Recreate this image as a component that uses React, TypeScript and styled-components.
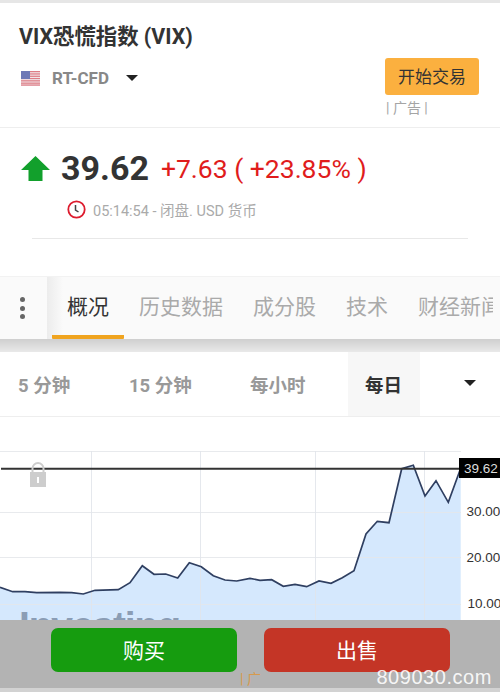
import { createGlobalStyle } from "styled-components";
import styled from "styled-components";

const GlobalStyle = createGlobalStyle`
  html, body {
    margin: 0;
    padding: 0;
    background: #fff;
  }
  body {
    font-family: Roboto, "Noto Sans CJK SC", sans-serif;
  }
`;

const Page = styled.div`
  position: relative;
  width: 500px;
  height: 692px;
  overflow: hidden;
  background: #fff;
  border-top: 3px solid #e6e6e6;
  box-sizing: border-box;
`;

const Header = styled.header`
  height: 125px;
  box-sizing: border-box;
  border-bottom: 1px solid #eeeeee;
  padding: 20px 21px 0 19px;
  display: flex;
  justify-content: space-between;
`;
const HeaderLeft = styled.div`
  display: flex;
  flex-direction: column;
  gap: 18px;
`;
const Title = styled.h1`
  margin: 0;
  font-size: 21.4px;
  line-height: 27px;
  font-weight: 700;
  color: #333;
`;
const Exchange = styled.div`
  display: flex;
  align-items: center;
  padding-left: 2px;
`;
const ExchangeName = styled.span`
  margin: 0 17px 0 12px;
  font-size: 17px;
  font-weight: 700;
  color: #888;
`;
const Ad = styled.div`
  padding-top: 35px;
  display: flex;
  flex-direction: column;
  align-items: flex-start;
`;
const TradeButton = styled.div`
  width: 94px;
  height: 37px;
  box-sizing: border-box;
  padding-bottom: 2px;
  border-radius: 3px;
  background: #fbb03f;
  color: #333;
  font-size: 17px;
  display: flex;
  align-items: center;
  justify-content: center;
`;
const AdNote = styled.div`
  margin: 5px 0 0 1px;
  font-size: 14px;
  line-height: 17px;
  color: #a5a5a5;
`;

const Quote = styled.section`
  height: 148px;
  box-sizing: border-box;
  padding-top: 20px;
  display: flex;
  flex-direction: column;
`;
const PriceRow = styled.div`
  display: flex;
  align-items: center;
  height: 40px;
  padding-left: 21px;
`;
const Price = styled.span`
  margin: 0 12px 0 11px;
  font-size: 34px;
  font-weight: 700;
  color: #333;
`;
const Change = styled.span`
  font-size: 26.5px;
  color: #e01c1c;
  white-space: pre;
`;
const TimeRow = styled.div`
  display: flex;
  align-items: center;
  gap: 7px;
  height: 20px;
  margin: 11px 0 0 67px;
  font-size: 14.5px;
  color: #aaa;
`;
const Divider = styled.div`
  margin: 19px 32px 0;
  border-top: 1px solid #e8e8e8;
`;

const TabBar = styled.nav`
  height: 63px;
  box-sizing: border-box;
  border-top: 1px solid #f2f2f2;
  background: #fafafa;
  padding-right: 7px;
  display: flex;
  overflow: hidden;
`;
const MenuButton = styled.div`
  width: 47px;
  flex: none;
  display: flex;
  flex-direction: column;
  align-items: center;
  justify-content: center;
  gap: 3.5px;
  padding: 0 3px 0 0;
  box-sizing: border-box;
`;
const Dot = styled.i`
  width: 5px;
  height: 5px;
  border-radius: 50%;
  background: #666;
`;
const TabList = styled.div`
  flex: 1;
  display: flex;
  align-items: stretch;
  padding-left: 5px;
  background: linear-gradient(90deg, #ececec, #fafafa 16px);
  overflow: hidden;
  min-width: 0;
`;
const Tab = styled.div<{ $active?: boolean }>`
  flex: none;
  box-sizing: border-box;
  padding: 0 15px;
  font-size: 21px;
  line-height: 61px;
  white-space: nowrap;
  color: ${(p) => (p.$active ? "#333" : "#aaa")};
  border-bottom: 4px solid ${(p) => (p.$active ? "#f0a41f" : "transparent")};
  border-radius: 0 0 1px 1px;
`;

const TabShadow = styled.div`
  height: 13px;
  background: linear-gradient(#cfcfcf, #e9e9e9);
`;

const Periods = styled.div`
  height: 65px;
  box-sizing: border-box;
  border-bottom: 1px solid #eeeeee;
  display: flex;
  align-items: stretch;
`;
const Period = styled.div<{ $active?: boolean; $width: number }>`
  width: ${(p) => p.$width}px;
  flex: none;
  box-sizing: border-box;
  padding-left: ${(p) => (p.$active ? 17 : 18)}px;
  display: flex;
  align-items: center;
  font-size: 18.5px;
  font-weight: 700;
  color: ${(p) => (p.$active ? "#333" : "#999")};
  background: ${(p) => (p.$active ? "#f7f7f7" : "transparent")};
`;
const PeriodCaret = styled.div`
  flex: 1;
  display: flex;
  justify-content: flex-end;
  padding: 28px 24px 0 0;
`;

const ChartArea = styled.div`
  margin-top: 34px;
  height: 169px;
  overflow: hidden;
`;
const ChartSvg = styled.svg`
  display: block;
`;

const ActionBar = styled.div`
  height: 68px;
  box-sizing: border-box;
  background: #b3b3b3;
  padding: 8px 50px 0 51px;
  display: flex;
  justify-content: space-between;
`;
const Action = styled.div<{ $color: string }>`
  width: 186px;
  height: 44px;
  box-sizing: border-box;
  padding-bottom: 2px;
  border-radius: 7px;
  background: ${(p) => p.$color};
  color: #fff;
  font-size: 21px;
  display: flex;
  align-items: center;
  justify-content: center;
`;
const BottomStrip = styled.div`
  height: 4px;
  background: #d2d2d2;
`;
const BarAdNote = styled.div`
  position: absolute;
  left: 240px;
  top: 668px;
  font-size: 14px;
  line-height: 16px;
  color: #d69a4e;
`;
const Watermark = styled.div`
  position: absolute;
  right: 8px;
  top: 661px;
  font-family: "Liberation Sans", sans-serif;
  font-size: 20px;
  line-height: 26px;
  letter-spacing: 0.55px;
  color: rgba(255, 255, 255, 0.9);
`;

const Caret = styled.svg`
  display: block;
  flex: none;
`;

const CaretIcon = () => (
  <Caret width="12" height="6" viewBox="0 0 12 6">
    <path d="M0 0h12L6 6z" fill="#222" />
  </Caret>
);

const Flag = () => (
  <svg width="19" height="15" viewBox="0 0 19 15" style={{ flex: "none" }}>
    <rect width="19" height="15" fill="#f3f1f3" />
    {[0, 2.3, 4.6, 6.9, 9.2, 11.5, 13.4].map((y) => (
      <rect key={y} y={y} width="19" height="1.3" fill="#de7d86" />
    ))}
    <rect width="9" height="8" fill="#6d78b6" />
  </svg>
);

const UpArrow = () => (
  <svg width="29" height="25" viewBox="0 0 29 25" style={{ flex: "none" }}>
    <path d="M14.5 0 29 14h-7.500v11h-14V14H0z" fill="#12a02c" />
  </svg>
);

const Clock = () => (
  <svg width="19" height="19" viewBox="0 0 19 19" style={{ flex: "none" }}>
    <circle cx="9.500" cy="9.500" r="8.200" fill="none" stroke="#dd1c2e" strokeWidth="1.800" />
    <path d="M8.500 5v5l3 2" fill="none" stroke="#444" strokeWidth="1.500" />
  </svg>
);

const leftLine =
  "0,587.3 12.7,591.7 25,591.7 36.700,592.7 60,592.3 71.700,592.7 83.300,594 95,590.3 118.300,589.7 130,582.7 142.300,565.7 154,574.3 165.700,574 177.700,578 189.300,562.7 201.300,566.7 213.300,575.7 225,580 236.700,581 250,578.3";
const rightLine =
  "260,580.3 271.700,579.7 283.300,586.3 295,584.3 306.700,586.7 319,581 331,583.3 342.300,577.7 354,570.7 366,534 377.300,521.3 389,522.7 401.700,468.7 413.300,465.3 425,496 436,480.7 448.300,502.3 460.700,468.3";
const linePoints = `${leftLine} ${rightLine}`;

const Chart = () => (
  <ChartSvg width="500" height="169" viewBox="0 451 500 169">
    <polygon points={`${linePoints} 460.700,620 0,620`} fill="#d5e8fd" />
    {[451.500, 512.500, 557.500, 604.500].map((y) => (
      <line key={y} x1="0" x2="461" y1={y} y2={y} stroke="#e4e6ea" strokeOpacity="0.85" />
    ))}
    {[91.500, 200.500, 315.500, 424.500].map((x) => (
      <line key={x} x1={x} x2={x} y1="451" y2="620" stroke="#e1e4ea" strokeOpacity="0.85" />
    ))}
    <text
      x="19"
      y="639"
      fontFamily="Liberation Sans, sans-serif"
      fontWeight="700"
      fontSize="39"
      fill="#8b9db5"
      textLength="162"
    >
      Investing
    </text>
    <polyline points={linePoints} fill="none" stroke="#2f3f61" strokeWidth="1.700" />
    <line x1="1" x2="461" y1="468.700" y2="468.700" stroke="#333" strokeWidth="2" />
    <g fill="#cdcdcd">
      <rect x="30" y="472" width="16" height="15" />
      <path
        d="M32.500 472v-3.500a5.500 5.500 0 0 1 11 0V472"
        fill="none"
        stroke="#cdcdcd"
        strokeWidth="2"
      />
    </g>
    <rect x="37" y="477" width="2" height="6" fill="#fff" />
    <rect x="459" y="458" width="41" height="20" fill="#000" />
    <g fontFamily="Liberation Sans, sans-serif" fontSize="13.500">
      <text x="464" y="473" fill="#ddd">
        39.62
      </text>
      <text x="466.500" y="516" fill="#333">
        30.00
      </text>
      <text x="466.500" y="562" fill="#333">
        20.00
      </text>
      <text x="467.500" y="608" fill="#333">
        10.00
      </text>
    </g>
  </ChartSvg>
);

const tabs = ["历史数据", "成分股", "技术", "财经新闻"];
const periods = [
  { label: "5 分钟", width: 111 },
  { label: "15 分钟", width: 121 },
  { label: "每小时", width: 116 },
];

export default function App() {
  return (
    <Page>
      <GlobalStyle />
      <Header>
        <HeaderLeft>
          <Title>VIX恐慌指数 (VIX)</Title>
          <Exchange>
            <Flag />
            <ExchangeName>RT-CFD</ExchangeName>
            <CaretIcon />
          </Exchange>
        </HeaderLeft>
        <Ad>
          <TradeButton>开始交易</TradeButton>
          <AdNote>| 广告 |</AdNote>
        </Ad>
      </Header>
      <Quote>
        <PriceRow>
          <UpArrow />
          <Price>39.62</Price>
          <Change>+7.63 ( +23.85% )</Change>
        </PriceRow>
        <TimeRow>
          <Clock />
          <span>05:14:54 - 闭盘. USD 货币</span>
        </TimeRow>
        <Divider />
      </Quote>
      <TabBar>
        <MenuButton>
          <Dot />
          <Dot />
          <Dot />
        </MenuButton>
        <TabList>
          <Tab $active>概况</Tab>
          {tabs.map((t) => (
            <Tab key={t}>{t}</Tab>
          ))}
        </TabList>
      </TabBar>
      <TabShadow />
      <Periods>
        {periods.map((p) => (
          <Period key={p.label} $width={p.width}>
            {p.label}
          </Period>
        ))}
        <Period $active $width={72}>
          每日
        </Period>
        <PeriodCaret>
          <CaretIcon />
        </PeriodCaret>
      </Periods>
      <ChartArea>
        <Chart />
      </ChartArea>
      <ActionBar>
        <Action $color="#169c0f">购买</Action>
        <Action $color="#c43526">出售</Action>
      </ActionBar>
      <BottomStrip />
      <BarAdNote>| 广</BarAdNote>
      <Watermark>809030.com</Watermark>
    </Page>
  );
}
